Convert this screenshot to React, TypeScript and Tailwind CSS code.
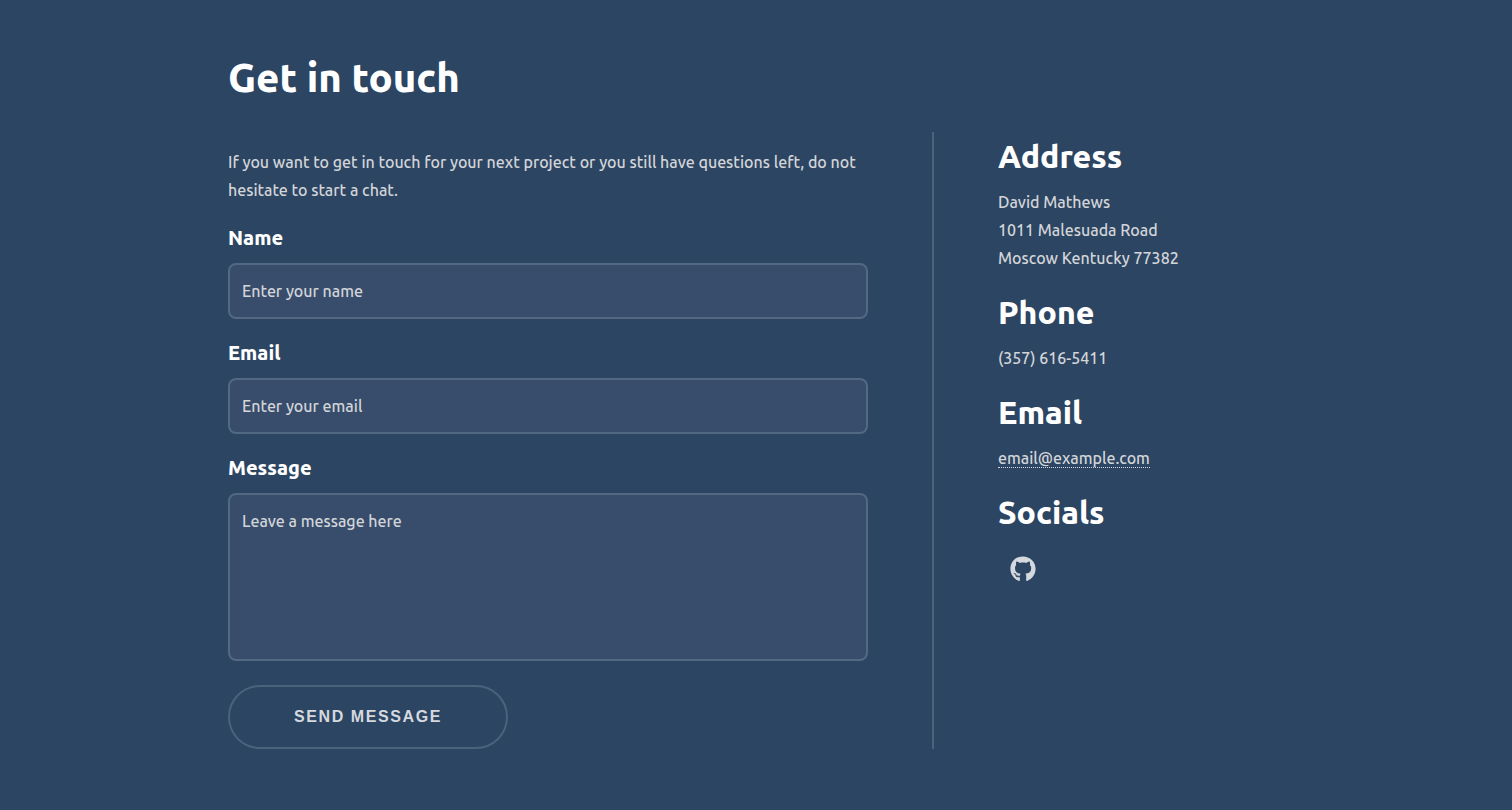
import type { ReactNode } from "react";
import { FaGithub } from "react-icons/fa";

const fieldClass =
  "block w-full rounded-lg border-2 border-[#536883] bg-[#374d6b] px-3 py-3 text-base leading-7 font-medium text-[#d3d5d9] placeholder:text-[#d3d5d9] placeholder:opacity-100 focus:outline-none focus:border-[#8295ad]";

function Field({ id, label, children }: { id: string; label: string; children: ReactNode }) {
  return (
    <div className="pt-5">
      <label htmlFor={id} className="mb-3 block text-[20px] leading-[27px] font-extrabold text-white">
        {label}
      </label>
      {children}
    </div>
  );
}

function Detail({ title, children }: { title: string; children: ReactNode }) {
  return (
    <section>
      <h2 className="mb-2 text-[32px] leading-12 font-extrabold text-white">{title}</h2>
      {children}
    </section>
  );
}

export default function App() {
  return (
    <main className="min-h-screen bg-[#2c4562] px-8 pt-12 pb-15 font-['Ubuntu','Noto_Sans',sans-serif] text-base leading-7 text-[#d3d5d9]">
      <div className="mx-auto max-w-[1056px] font-medium">
        <h1 className="mb-6 text-[40px] leading-[60px] font-extrabold text-white">Get in touch</h1>
        <div className="flex gap-16">
          <form className="min-w-0 flex-1 pt-4" onSubmit={(event) => event.preventDefault()}>
            <p>
              If you want to get in touch for your next project or you still have questions left, do not hesitate to
              start a chat.
            </p>
            <Field id="name" label="Name">
              <input id="name" type="text" placeholder="Enter your name" className={fieldClass} />
            </Field>
            <Field id="email" label="Email">
              <input id="email" type="email" placeholder="Enter your email" className={fieldClass} />
            </Field>
            <Field id="message" label="Message">
              <textarea
                id="message"
                rows={5}
                placeholder="Leave a message here"
                className={`${fieldClass} resize-none`}
              />
            </Field>
            <button
              type="submit"
              className="mt-6 block h-16 w-70 rounded-full border-2 border-[#4b627d] font-['Liberation_Sans',sans-serif] text-base font-bold tracking-widest text-[#d5d9df] uppercase"
            >
              Send message
            </button>
          </form>
          <aside className="flex w-[352px] flex-col gap-4 border-l-2 border-[#4b627d] pl-16">
            <Detail title="Address">
              <address className="not-italic">
                David Mathews
                <br />
                1011 Malesuada Road
                <br />
                Moscow Kentucky 77382
              </address>
            </Detail>
            <Detail title="Phone">
              <p>(357) 616-5411</p>
            </Detail>
            <Detail title="Email">
              <p className="flex h-7 items-center">
                <a href="mailto:email@example.com" className="border-b border-dotted border-[#d5d9df] leading-[18px]">
                  email@example.com
                </a>
              </p>
            </Detail>
            <Detail title="Socials">
              <a href="https://github.com" aria-label="GitHub" className="inline-block p-3">
                <FaGithub className="size-[26px] text-[#d5d9df]" aria-hidden="true" />
              </a>
            </Detail>
          </aside>
        </div>
      </div>
    </main>
  );
}
